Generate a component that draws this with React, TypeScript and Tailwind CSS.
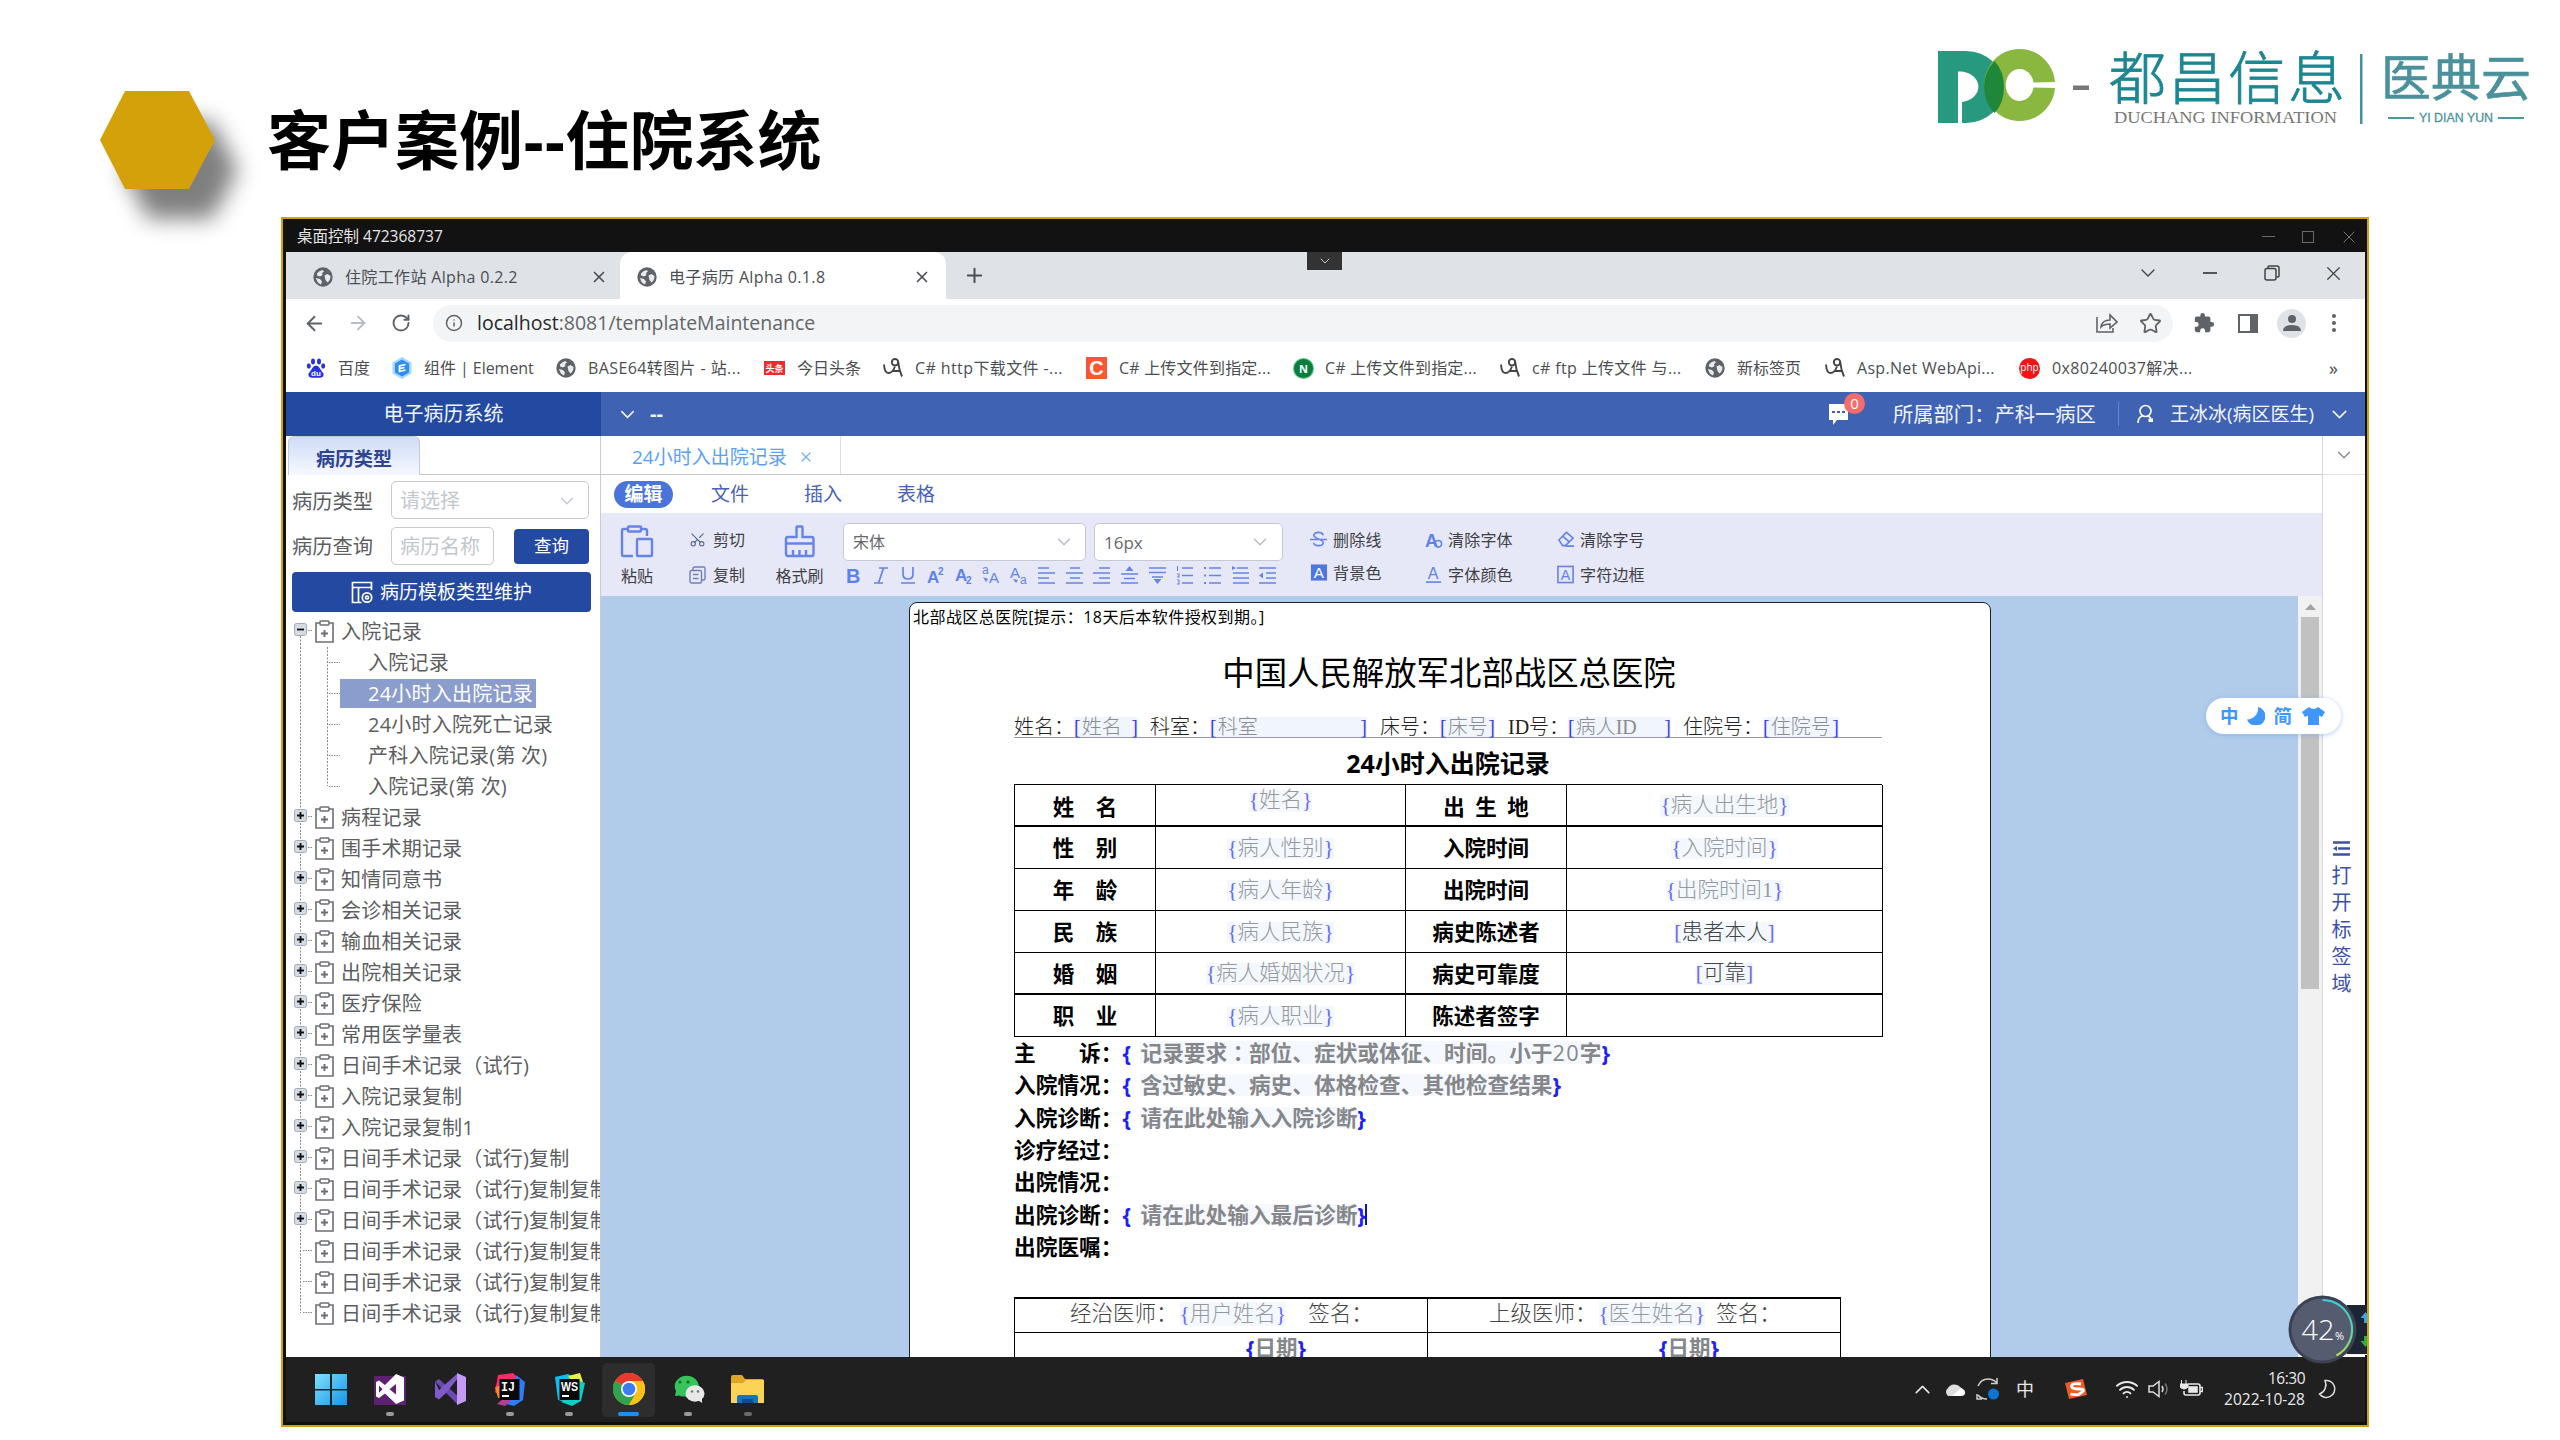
import React from "react";
import {
  ArrowLeft,
  ArrowRight,
  RotateCw,
  Info,
  Star,
  ChevronDown,
  ChevronUp,
  X,
  Plus,
  Scissors,
  Wifi,
} from "lucide-react";

const SONG = "font-['Liberation_Serif','Noto_Sans_CJK_SC',sans-serif] font-light";

/* ---------- slide header ---------- */

function Hexagon() {
  return (
    <svg className="block" width="180" height="190" viewBox="0 0 180 190">
      <defs>
        <filter id="hexShadow" x="-50%" y="-50%" width="200%" height="200%">
          <feGaussianBlur stdDeviation="11" />
        </filter>
      </defs>
      <polygon points="55,51 119,51 145,100 119,149 55,149 30,100" fill="#000" opacity="0.5" filter="url(#hexShadow)" transform="translate(13 10)" />
      <polygon points="45,31 109,31 135,80 109,129 45,129 20,80" fill="#d5a10b" />
    </svg>
  );
}

function BrandLogo() {
  return (
    <svg className="block overflow-visible" width="620" height="90" viewBox="1930 40 620 90" lang="zh-CN">
      <path d="M1938 50H1966A38 36 0 0 1 1966 122H1962V101A20 15.500 0 0 0 1962 70.500H1958V122H1938Z" fill="#27997f" />
      <path d="M2055 81A35.500 36 0 1 0 2055 87L2033.500 86.500A14 16 0 1 1 2033.500 81.500Z" fill="#8ab740" />
      <path d="M1994.500 60Q2004 70 2004 86T1994.500 112Q1984 101 1984 86T1994.500 60Z" fill="#1f873a" />
      <rect x="2073" y="84.500" width="16" height="4.500" fill="#777" />
      <text x="2109" y="98" fontSize="57" fontWeight="300" fill="#1d8693" stroke="#1d8693" strokeWidth="0.800" textLength="236" lengthAdjust="spacing" fontFamily="Noto Sans CJK SC, sans-serif">都昌信息</text>
      <text x="2114" y="122" fontSize="17.500" fill="#777" textLength="223" lengthAdjust="spacingAndGlyphs" fontFamily="Liberation Serif, serif">DUCHANG INFORMATION</text>
      <rect x="2360" y="53" width="2.500" height="70" fill="#4a8fa0" />
      <text x="2381" y="95" fontSize="50" fill="#4a919b" stroke="#4a919b" strokeWidth="0.600" textLength="150" lengthAdjust="spacing" fontFamily="Noto Sans CJK SC, sans-serif">医典云</text>
      <rect x="2388" y="116" width="26" height="2" fill="#4a9a9c" />
      <rect x="2498" y="116" width="26" height="2" fill="#4a9a9c" />
      <text x="2419" y="121" fontSize="13" fill="#4a919b" stroke="#4a919b" strokeWidth="0.300" textLength="74" lengthAdjust="spacingAndGlyphs" fontFamily="Liberation Sans, sans-serif">YI DIAN YUN</text>
    </svg>
  );
}

/* ---------- browser chrome ---------- */

function Globe() {
  return (
    <svg className="block shrink-0" width="20" height="20" viewBox="0 0 20 20">
      <circle cx="10" cy="10" r="9.700" fill="#5f6368" />
      <path d="M4 6.500Q6 3.500 9.500 3l1.500 1.500-2 1.500.5 2-2.500 1.500-3-1Z" fill="#e8eaed" />
      <path d="M3 11l4 1 2 2.500-1 3Q4 16 3 11Z" fill="#e8eaed" />
      <path d="M11.500 8.500l3-1.500 3 2q0 4-3 6.500l-2-2.500Z" fill="#e8eaed" />
    </svg>
  );
}
function Baidu() {
  return (
    <svg className="block shrink-0" width="20" height="20" viewBox="0 0 20 20" fill="#2932e1">
      <ellipse cx="7" cy="3.500" rx="2" ry="3" />
      <ellipse cx="13" cy="3.500" rx="2" ry="3" />
      <ellipse cx="2.800" cy="8" rx="2" ry="2.700" />
      <ellipse cx="17.200" cy="8" rx="2" ry="2.700" />
      <path d="M10 7.500q2.500 0 4 3t3.500 5q.5 4.500-4 4.300h-7q-4.500.2-4-4.300 2-2 3.500-5t4-3Z" />
      <text x="5" y="17.500" fontSize="8" fontWeight="700" fill="#fff" fontFamily="Liberation Sans, sans-serif">du</text>
    </svg>
  );
}
function ElementIcon() {
  return (
    <svg className="block shrink-0" width="20" height="22" viewBox="0 0 20 22">
      <polygon points="10,0 19.500,5.500 19.500,16.500 10,22 .5,16.500 .5,5.500" fill="#a5d7ff" />
      <polygon points="10,2.500 17,6.500 17,15.500 10,19.500 3,15.500 3,6.500" fill="#2f8ff0" />
      <path d="M13.500 7.500L7.500 9v5.500l6-1.500M7.500 11.700l5-1.200" stroke="#fff" strokeWidth="1.700" fill="none" />
    </svg>
  );
}
function Toutiao() {
  return (
    <div className="flex h-[14px] w-[21px] shrink-0 items-center justify-center bg-[#f02b2b] text-[9px] font-bold text-white">头条</div>
  );
}
function Pen() {
  return (
    <svg className="block shrink-0" width="20" height="20" viewBox="0 0 20 20" fill="none" stroke="#444" strokeWidth="1.900">
      <path d="M1 6.500Q1.500 15 5.500 15T12 8.500" />
      <circle cx="12" cy="4.200" r="3.200" />
      <path d="M15.200 4Q16 12 19 18.500M9.500 13h7" />
    </svg>
  );
}
function CIcon() {
  return (
    <div className="flex h-[22px] w-[21px] shrink-0 items-center justify-center bg-[#fc5531] font-['Liberation_Sans',sans-serif] text-[20px] font-bold text-white">C</div>
  );
}
function NIcon() {
  return (
    <div className="flex size-[19px] shrink-0 items-center justify-center rounded-full bg-[#0b7d3d] text-[11px] font-bold text-white ring-1 ring-[#58c98a]">N</div>
  );
}
function Php() {
  return (
    <div className="flex size-[21px] shrink-0 items-center justify-center rounded-full bg-[#f01414] pb-[2px] text-[10px] text-white">php</div>
  );
}

const BOOKMARKS: { w: string; icon: React.ReactNode; label: string; ls: string }[] = [
  { w: "w-[86px]", icon: <Baidu />, label: "百度", ls: "" },
  { w: "w-[164px]", icon: <ElementIcon />, label: "组件 | Element", ls: "-tracking-[0.050px]" },
  { w: "w-[208px]", icon: <Globe />, label: "BASE64转图片 - 站...", ls: "tracking-[0.400px]" },
  { w: "w-[119px]", icon: <Toutiao />, label: "今日头条", ls: "" },
  { w: "w-[203px]", icon: <Pen />, label: "C# http下载文件 -...", ls: "tracking-[0.400px]" },
  { w: "w-[208px]", icon: <CIcon />, label: "C# 上传文件到指定...", ls: "tracking-[0.200px]" },
  { w: "w-[206px]", icon: <NIcon />, label: "C# 上传文件到指定...", ls: "tracking-[0.200px]" },
  { w: "w-[205px]", icon: <Pen />, label: "c# ftp 上传文件 与...", ls: "tracking-[0.350px]" },
  { w: "w-[120px]", icon: <Globe />, label: "新标签页", ls: "" },
  { w: "w-[194px]", icon: <Pen />, label: "Asp.Net WebApi...", ls: "tracking-[0.300px]" },
  { w: "w-[310px]", icon: <Php />, label: "0x80240037解决...", ls: "tracking-[0.350px]" },
];

function RemoteBar() {
  return (
    <div className="flex h-[33px] items-center bg-[#121212] pt-[2px] text-[#e6e6e6]">
      <span className="ml-[14px] w-[1965px] whitespace-nowrap text-[15.500px]">桌面控制 472368737</span>
      <div className="h-px w-[13px] bg-[#6a6a6a]" />
      <div className="ml-[27px] h-[12px] w-[12px] border border-[#6a6a6a]" />
      <X className="ml-[25px] shrink-0 text-[#808080]" size={20} strokeWidth={1.100} />
    </div>
  );
}

function TabStrip() {
  return (
    <div className="flex h-[47px] bg-[#dfe2e6] text-[16px] tracking-[0.350px] text-[#4b4e52]">
      <div className="flex h-full w-[334px] items-center pt-[3px] pl-[27px]">
        <Globe />
        <span className="ml-[12px] w-[245px] whitespace-nowrap">住院工作站 Alpha 0.2.2</span>
        <X size={18} strokeWidth={2.200} />
      </div>
      <div className="flex h-full w-[326px] items-center rounded-t-[12px] bg-white pt-[3px] pl-[17px]">
        <Globe />
        <span className="ml-[12px] w-[244px] whitespace-nowrap">电子病历 Alpha 0.1.8</span>
        <X size={18} strokeWidth={2.200} />
      </div>
      <div className="flex h-full w-[1190px] items-center pl-[17px]">
        <Plus size={23} strokeWidth={2.100} />
      </div>
      <div className="flex h-[42px] items-center text-[#444]">
        <ChevronDown size={24} strokeWidth={1.400} />
        <div className="ml-[43px] h-[1.500px] w-[14px] bg-[#555]" />
        <svg className="ml-[47px]" width="16" height="16" viewBox="0 0 16 16" fill="none" stroke="#444" strokeWidth="1.500">
          <rect x="1" y="3.500" width="11" height="11.500" rx="2" />
          <path d="M4 3.500V2q0-1 1-1h8q2 0 2 2v8q0 1-1 1h-1.500" />
        </svg>
        <X className="ml-[42px]" size={23} strokeWidth={1.300} />
      </div>
    </div>
  );
}

function AddressBar() {
  return (
    <div className="flex h-[48px] items-center bg-white pl-[17px] text-[#5f6368]">
      <ArrowLeft size={23} strokeWidth={2} />
      <ArrowRight className="ml-[21px] text-[#b9bcc0]" size={22} strokeWidth={2} />
      <RotateCw className="ml-[22px]" size={20} strokeWidth={2.300} />
      <div className="ml-[22px] flex h-[37px] w-[1740px] items-center rounded-full bg-[#f3f4f5]">
        <Info className="ml-[12px]" size={18} strokeWidth={2} />
        <span className="ml-[14px] w-[1619px] text-[19.500px] text-[#62666a]">
          <span className="text-[#26282b]">localhost</span>:8081/templateMaintenance
        </span>
        <svg width="22" height="20" viewBox="0 0 22 20" fill="none" stroke="#5f6368" strokeWidth="1.600">
          <path d="M1 4v15h16v-4" />
          <path d="M5 14q1-7 9-7V2l7 7-7 6v-4q-6 0-9 3Z" />
        </svg>
        <Star className="ml-[21px]" size={23} strokeWidth={1.900} />
      </div>
      <svg className="ml-[20px]" width="22" height="22" viewBox="0 0 24 24" fill="#5f6368">
        <path d="M20.500 11H19V7a2 2 0 0 0-2-2h-4V3.500a2.500 2.500 0 0 0-5 0V5H4a2 2 0 0 0-2 2v3.800h1.500a2.700 2.700 0 0 1 0 5.400H2V20a2 2 0 0 0 2 2h3.800v-1.500a2.700 2.700 0 0 1 5.400 0V22H17a2 2 0 0 0 2-2v-4h1.500a2.500 2.500 0 0 0 0-5Z" />
      </svg>
      <div className="ml-[23px] h-[19px] w-[20px] border-y-[2px] border-r-[8px] border-l-[2.500px] border-[#5f6368]" />
      <div className="ml-[19px] flex size-[29px] items-center justify-center rounded-full bg-[#dfe3e8]">
        <svg width="18" height="18" viewBox="0 0 18 18" fill="#5f6368">
          <circle cx="9" cy="5" r="4" />
          <path d="M0 17q0-6 9-6t9 6Z" />
        </svg>
      </div>
      <svg className="ml-[25px]" width="6" height="20" viewBox="0 0 6 20" fill="#5f6368">
        <circle cx="3" cy="3" r="2" />
        <circle cx="3" cy="10" r="2" />
        <circle cx="3" cy="17" r="2" />
      </svg>
    </div>
  );
}

function Bookmarks() {
  return (
    <div className="flex h-[45px] items-center bg-white pb-[3px] pl-[20px] text-[16px] text-[#4b4e52]">
      {BOOKMARKS.map((b, i) => (
        <div key={i} className={"flex shrink-0 items-center gap-[12px] " + b.w}>
          {b.icon}
          <span className={"whitespace-nowrap " + b.ls}>{b.label}</span>
        </div>
      ))}
      <span className="text-[18px]">»</span>
    </div>
  );
}

/* ---------- application header ---------- */

function AppHeader() {
  return (
    <div className="flex h-[44px] text-[20px] text-[#f0f4ff]">
      <div className="flex w-[315px] items-center justify-center bg-[#2449a0]">电子病历系统</div>
      <div className="flex flex-1 items-center bg-[#4062b2]">
        <ChevronDown className="ml-[15px]" size={23} strokeWidth={1.600} />
        <span className="ml-[11px] w-[1178px] font-bold">--</span>
        <div className="relative">
          <svg className="block" width="21" height="22" viewBox="0 0 21 22">
            <path d="M1 1h19v16h-11l-4 5v-5H1Z" fill="#fff" />
            <path d="M4 9h3M9 9h3M14 9h3" stroke="#4062b2" strokeWidth="2" />
          </svg>
          <div className="absolute -top-[10px] left-[16px] flex size-[21px] items-center justify-center rounded-full bg-[#f56c6c] text-[15px] text-white">0</div>
        </div>
        <span className="ml-[44px] w-[225px] whitespace-nowrap text-[20.300px]">所属部门：产科一病区</span>
        <div className="h-[24px] w-px bg-[#6c88c8]" />
        <svg className="ml-[18px]" width="18" height="20" viewBox="0 0 18 20" fill="none" stroke="#fff" strokeWidth="1.600">
          <circle cx="8.500" cy="7" r="5.500" />
          <path d="M1 19q0-6 5-7.500M11 11.500l3 3" />
          <rect x="11.500" y="14.500" width="4.500" height="3.500" fill="#fff" stroke="none" />
        </svg>
        <span className="ml-[15px] w-[157px] whitespace-nowrap text-[19px]">王冰冰(病区医生)</span>
        <ChevronDown size={25} strokeWidth={1.500} />
      </div>
    </div>
  );
}

/* ---------- sidebar ---------- */

function Clipboard() {
  return (
    <svg className="block shrink-0" width="19" height="23" viewBox="0 0 19 23" fill="none" stroke="#6d6f73" strokeWidth="1.600">
      <path d="M5 3H1V22H18V3H14" />
      <rect x="5" y="1" width="9" height="4" rx="1" />
      <path d="M9.500 10v7M6 13.500h7" strokeWidth="1.900" />
    </svg>
  );
}

type Node = { label: string; kind: "open" | "closed" | "leaf" | "last" | "child" | "childLast"; sel?: boolean };
const TREE: Node[] = [
  { label: "入院记录", kind: "open" },
  { label: "入院记录", kind: "child" },
  { label: "24小时入出院记录", kind: "child", sel: true },
  { label: "24小时入院死亡记录", kind: "child" },
  { label: "产科入院记录(第 次)", kind: "child" },
  { label: "入院记录(第 次)", kind: "childLast" },
  { label: "病程记录", kind: "closed" },
  { label: "围手术期记录", kind: "closed" },
  { label: "知情同意书", kind: "closed" },
  { label: "会诊相关记录", kind: "closed" },
  { label: "输血相关记录", kind: "closed" },
  { label: "出院相关记录", kind: "closed" },
  { label: "医疗保险", kind: "closed" },
  { label: "常用医学量表", kind: "closed" },
  { label: "日间手术记录（试行)", kind: "closed" },
  { label: "入院记录复制", kind: "closed" },
  { label: "入院记录复制1", kind: "closed" },
  { label: "日间手术记录（试行)复制", kind: "closed" },
  { label: "日间手术记录（试行)复制复制", kind: "closed" },
  { label: "日间手术记录（试行)复制复制", kind: "closed" },
  { label: "日间手术记录（试行)复制复制", kind: "leaf" },
  { label: "日间手术记录（试行)复制复制", kind: "leaf" },
  { label: "日间手术记录（试行)复制复制", kind: "last" },
];

function Gutter({ kind }: { kind: Node["kind"] }) {
  const child = kind === "child" || kind === "childLast";
  const box = kind === "open" || kind === "closed";
  return (
    <svg className="block shrink-0" width={child ? 54 : 29} height="31" viewBox={child ? "0 0 54 31" : "0 0 29 31"} stroke="#888" strokeWidth="1" fill="none">
      <path d={kind === "open" ? "M14.500 13V31" : kind === "last" ? "M14.500 0V15" : "M14.500 0V31"} strokeDasharray="2 1.500" />
      {child && <path d={kind === "childLast" ? "M41.500 0V15" : "M41.500 0V31"} strokeDasharray="2 1.500" />}
      {child && <path d="M43 15.500H54" strokeDasharray="1.500 1" />}
      {!child && <path d="M17 14.500H27" strokeDasharray="1.500 1" />}
      {box && (
        <g>
          <rect x="8.500" y="7.500" width="12" height="12" rx="2" fill="#d5dbe3" stroke="#a3abb8" />
          <path d={kind === "closed" ? "M11 13.500H18M14.500 10V17" : "M11 13.500H18"} stroke="#111" strokeWidth="1.800" />
        </g>
      )}
    </svg>
  );
}

function Sidebar() {
  return (
    <div className="flex w-[315px] shrink-0 flex-col overflow-hidden border-r border-[#c9ccd4] bg-white text-[20px] text-[#5c5e62]">
      <div className="flex h-[39px] pl-[2px]">
        <div className="flex w-[132px] items-center justify-center rounded-t-[6px] border border-b-0 border-[#c3c9d6] bg-gradient-to-b from-[#cfdcf6] to-[#f6f9ff] pt-[7px] text-[19px] font-bold text-[#2f4591]">病历类型</div>
        <div className="flex-1 border-b border-[#c6c8cc]" />
      </div>
      <div className="mt-[6px] flex h-[38px] items-center pl-[6px]">
        <span className="w-[99px] pt-[2px] text-[20.300px]">病历类型</span>
        <div className="flex h-[38px] w-[198px] items-center justify-between rounded-[5px] border border-[#c8cad0] pt-[2px] pr-[10px] pl-[8px] text-[#c4c7cd]">
          请选择
          <ChevronDown size={22} strokeWidth={1.400} />
        </div>
      </div>
      <div className="mt-[8px] flex h-[38px] items-center pl-[6px]">
        <span className="w-[99px] pt-[1px] text-[20.300px]">病历查询</span>
        <div className="flex h-[38px] w-[103px] items-center rounded-[5px] border border-[#c8cad0] pt-[1px] pl-[8px] text-[#c4c7cd]">病历名称</div>
        <div className="ml-[20px] flex h-[35px] w-[75px] items-center justify-center rounded-[4px] bg-[#2449a0] text-[17.500px] text-white">查询</div>
      </div>
      <div className="mt-[7px] ml-[6px] flex h-[40px] w-[299px] items-center justify-center gap-[6px] rounded-[4px] bg-[#2449a0] text-[19px] text-white">
        <svg width="23" height="23" viewBox="0 0 23 23" fill="none" stroke="#fff" strokeWidth="1.700">
          <path d="M20.500 9V1.500H1.500v20h9M1.500 6.500h19M7.500 6.500v15" />
          <circle cx="16" cy="16.500" r="4.700" />
          <circle cx="16" cy="16.500" r="1.500" />
        </svg>
        病历模板类型维护
      </div>
      <div className="mt-[4px] flex flex-col tracking-[0.220px]">
        {TREE.map((n, i) => {
          const child = n.kind === "child" || n.kind === "childLast";
          return (
            <div key={i} className="flex h-[31px] items-center whitespace-nowrap">
              <Gutter kind={n.kind} />
              {child ? (
                <span className={n.sel ? "flex h-[29px] items-center bg-[#8b9dcc] pr-[3px] pl-[28px] text-white" : "pl-[28px]"}>{n.label}</span>
              ) : (
                <React.Fragment>
                  <Clipboard />
                  <span className="ml-[7px]">{n.label}</span>
                </React.Fragment>
              )}
            </div>
          );
        })}
      </div>
    </div>
  );
}

/* ---------- editor ribbon ---------- */

const S = { fill: "none", stroke: "#6584e4", strokeWidth: 1.7 } as const;
const GLYPHS: React.ReactNode[] = [
  <text x="3" y="17" fontSize="20" fontWeight="600" fill="#5f82e6">B</text>,
  <path d="M8 2h9M3 17h9M12.500 2L7.500 17" {...S} />,
  <path d="M5 1v7q0 5 5 5t5-5V1M3 17h14" {...S} />,
  <g fill="#5f82e6" fontWeight="600"><text x="1" y="17" fontSize="17">A</text><text x="12" y="9" fontSize="10">2</text></g>,
  <g fill="#5f82e6" fontWeight="600"><text x="1" y="15" fontSize="17">A</text><text x="12" y="18" fontSize="10">2</text></g>,
  <g fill="#6584e4"><text x="1" y="8" fontSize="12">a</text><text x="8" y="17" fontSize="15">A</text><path d="M2 11l3 5 2-3Z" /></g>,
  <g fill="#6584e4"><text x="1" y="12" fontSize="15">A</text><text x="11" y="18" fontSize="12">a</text><path d="M4 13l3 4 2-3Z" /></g>,
  <path d="M1 2h11M1 7h17M1 12h11M1 17h17" {...S} />,
  <path d="M5 2h10M1 7h17M5 12h10M1 17h17" {...S} />,
  <path d="M7 2h11M1 7h17M7 12h11M1 17h17" {...S} />,
  <g><path d="M1 8h17M4 12.500h11M1 17h17" {...S} /><path d="M9.500 0l4 5h-8Z" fill="#6584e4" /></g>,
  <g><path d="M1 2h17M1 6.500h17M4 11h11" {...S} /><path d="M9.500 18l-4-5h8Z" fill="#6584e4" /></g>,
  <g><path d="M7 2h11M7 9.500h11M7 17h11" {...S} /><path d="M2.500 0v5M2 8h2v3H2M2 14h2v4H2" {...S} strokeWidth={1.1} /></g>,
  <g><path d="M6 2h12M6 9.500h12M6 17h12" {...S} /><path d="M1 2h2M1 9.500h2M1 17h2" {...S} strokeWidth={2.2} /></g>,
  <g><path d="M6 2h11M2 7h16M2 12h16M2 17h16" {...S} /><path d="M1 0l4 2-4 2Z" fill="#6584e4" /></g>,
  <g><path d="M1 2h17M8 7h10M8 12h10M1 17h17" {...S} /><path d="M1 9.500l4-3v6Z" fill="#6584e4" /></g>,
];

const MINI: { icon: React.ReactNode; label: string }[][] = [
  [
    { icon: <path d="M14 5q-1-3-5-3t-5 3q0 2 5 4t5 4q0 3-5 3t-5-3M0 9.500h18" {...S} />, label: "删除线" },
    { icon: <g><rect x="1" y="1" width="17" height="17" fill="#4f76dc" /><text x="4" y="15.500" fontSize="16" fill="#fff">A</text></g>, label: "背景色" },
  ],
  [
    { icon: <g><text x="0" y="17" fontSize="19" fontWeight="600" fill="#5f82e6">A</text><circle cx="14" cy="14" r="3.500" {...S} /></g>, label: "清除字体" },
    { icon: <g><text x="3" y="14" fontSize="17" fill="#5f82e6">A</text><path d="M1 17.500h16" {...S} /></g>, label: "字体颜色" },
  ],
  [
    { icon: <path d="M2 10L10 2l7 6-8 8H6ZM6 6l7 6M9 16.500h9" {...S} />, label: "清除字号" },
    { icon: <g><rect x="1" y="1" width="16" height="17" {...S} /><text x="4" y="15.500" fontSize="15" fill="#5f82e6">A</text></g>, label: "字符边框" },
  ],
];

function Ribbon() {
  return (
    <div className="flex h-[83px] bg-[#e6e8f8] text-[16px] text-[#3e4044]">
      <div className="flex w-[69px] flex-col items-center pt-[12px] pl-[3px]">
        <svg width="34" height="33" viewBox="0 0 34 33" fill="none" stroke="#6584e4" strokeWidth="2.400">
          <path d="M8 4H3.500q-1.500 0-1.500 1.500V29q0 2 1.500 2H13M20 4h5q2 0 2 1.500V11" />
          <rect x="8" y="1.500" width="13" height="5" rx="1" />
          <rect x="17" y="14" width="15" height="17" rx="1" />
        </svg>
        <span className="mt-[10px]">粘贴</span>
      </div>
      <div className="flex w-[90px] flex-col pt-[18px] pl-[19px]">
        <div className="flex items-center gap-[7px] whitespace-nowrap"><Scissors className="-rotate-90 text-[#5b6b94]" size={17} strokeWidth={1.600} />剪切</div>
        <div className="mt-[18px] flex items-center gap-[7px] whitespace-nowrap">
          <svg width="17" height="18" viewBox="0 0 17 18" fill="none" stroke="#6f80b8" strokeWidth="1.400">
            <rect x="1" y="4.500" width="11.500" height="12.500" rx="1.500" />
            <path d="M4 4V2.500Q4 1 5.500 1H14.500Q16 1 16 2.500V12.500Q16 14 14.500 14H13M4 8.500H9.500M4 12.500H9.500" />
          </svg>
          复制
        </div>
      </div>
      <div className="flex w-[77px] flex-col items-center pt-[12px] pl-[2px]">
        <svg width="32" height="33" viewBox="0 0 32 33" fill="none" stroke="#6584e4" strokeWidth="2.400">
          <path d="M12.500 12V2.500q0-1 1-1h4q1 0 1 1V12h9q2 0 2 2v15q0 2-2 2H4q-2 0-2-2V14q0-2 2-2ZM2 18.500h28M9 31v-6M15.500 31v-6M22 31v-6" />
        </svg>
        <span className="mt-[10px]">格式刷</span>
      </div>
      <div className="flex w-[463px] flex-col pt-[10px] pl-[6px]">
        <div className="flex gap-[8px]">
          <div className="flex h-[38px] w-[243px] items-center justify-between rounded-[5px] border border-[#c6c9d4] bg-white pr-[10px] pl-[9px] text-[#66686c]">宋体<ChevronDown size={22} strokeWidth={1.300} className="text-[#b4b7be]" /></div>
          <div className="flex h-[38px] w-[189px] items-center justify-between rounded-[5px] border border-[#c6c9d4] bg-white pr-[11px] pl-[9px] text-[17px] text-[#66686c]">16px<ChevronDown size={22} strokeWidth={1.300} className="text-[#b4b7be]" /></div>
        </div>
        <div className="mt-[5px] flex font-['Liberation_Sans',sans-serif]">
          {GLYPHS.map((g, i) => (
            <svg key={i} className="mr-[8.700px] block shrink-0" width="19" height="19" viewBox="0 0 19 19">{g}</svg>
          ))}
        </div>
      </div>
      <div className="flex pt-[17px] pl-[10px]">
        {MINI.map((col, i) => (
          <div key={i} className={i === 1 ? "w-[132px]" : "w-[115px]"}>
            {col.map((m, j) => (
              <div key={j} className={"flex items-center gap-[5px] whitespace-nowrap tracking-[0.200px] " + (j ? (i ? "mt-[16px]" : "mt-[14px]") : "")}>
                <svg className="block shrink-0 font-['Liberation_Sans',sans-serif]" width="18" height="19" viewBox="0 0 19 19">{m.icon}</svg>
                {m.label}
              </div>
            ))}
          </div>
        ))}
      </div>
    </div>
  );
}

/* ---------- document ---------- */

const Br = ({ c }: { c: string }) => <span className="text-[#3a3af0]">{c}</span>;

function Field({ l, r, v, cls }: { l: string; r: string; v: string; cls?: string }) {
  return (
    <span className={"flex justify-between bg-[#f1f6fe] text-[#8a8c90] " + (cls || "")}>
      <Br c={l} />
      <span className="flex-1 pl-px">{v}</span>
      <Br c={r} />
    </span>
  );
}

const ROWS: [string, string, string, string][] = [
  ["姓　名", "{姓名}", "出 生 地", "{病人出生地}"],
  ["性　别", "{病人性别}", "入院时间", "{入院时间}"],
  ["年　龄", "{病人年龄}", "出院时间", "{出院时间1}"],
  ["民　族", "{病人民族}", "病史陈述者", "[患者本人]"],
  ["婚　姻", "{病人婚姻状况}", "病史可靠度", "[可靠]"],
  ["职　业", "{病人职业}", "陈述者签字", ""],
];

function Value({ v }: { v: string }) {
  if (!v) return null;
  const solid = v[0] === "[";
  return (
    <span className={"bg-[#f3f8ff] " + (solid ? "text-[#444]" : "text-[#97999c]")}>
      <span className="text-[#6a6af5]">{v[0]}</span>
      {v.slice(1, -1)}
      <span className="text-[#6a6af5]">{v[v.length - 1]}</span>
    </span>
  );
}

const SECTIONS: { label: string; hint?: React.ReactNode; caret?: boolean }[] = [
  {
    label: "主　　诉：",
    hint: (
      <React.Fragment>
        记录要求<span lang="zh-TW" className="font-['Noto_Sans_CJK_TC',sans-serif]">：</span>部位、症状或体征、时间。小于<span className="font-medium tracking-[1.200px]">20</span>字
      </React.Fragment>
    ),
  },
  { label: "入院情况：", hint: "含过敏史、病史、体格检查、其他检查结果" },
  { label: "入院诊断：", hint: "请在此处输入入院诊断" },
  { label: "诊疗经过：" },
  { label: "出院情况：" },
  { label: "出院诊断：", hint: "请在此处输入最后诊断", caret: true },
  { label: "出院医嘱：" },
];

const CELL = "flex items-center justify-center whitespace-pre border-r border-b border-black ";

function Paper() {
  return (
    <div className="mt-[6px] ml-[308px] h-[770px] w-[1082px] shrink-0 rounded-t-[8px] border-[1.500px] border-[#1c1f28] bg-white text-black">
      <div className="mt-[6px] ml-[3px] text-[16px] tracking-[0.450px]">北部战区总医院[提示：18天后本软件授权到期。]</div>
      <div className="ml-[104px] w-[868px]">
        <div className="mt-[31px] pl-[2px] text-center text-[32.400px]">中国人民解放军北部战区总医院</div>
        <div className={"mt-[28px] flex h-[22px] items-center border-b border-[#9a9a9a] text-[20px] whitespace-nowrap text-[#222] " + SONG}>
          <span className="w-[60px]">姓名：</span>
          <Field l="[" r="]" v="姓名" cls="w-[64px]" />
          <span className="ml-[12px] w-[60px]">科室：</span>
          <Field l="[" r="]" v="科室" cls="w-[157px]" />
          <span className="ml-[13px] w-[60px]">床号：</span>
          <Field l="[" r="]" v="床号" cls="w-[55px]" />
          <span className="ml-[13px] w-[60px]">ID号：</span>
          <Field l="[" r="]" v="病人ID" cls="w-[103px]" />
          <span className="ml-[12px] w-[80px]">住院号：</span>
          <Field l="[" r="]" v="住院号" cls="w-[76px]" />
        </div>
        <div className="mt-[13px] text-center text-[25px] font-bold">24小时入出院记录</div>
        <div className="mt-[8px] grid w-[868px] grid-cols-[141px_250px_161px_316px] auto-rows-[42px] border-t border-l border-black text-[21.500px]">
          {ROWS.map((r, i) => {
            const thick = i === 0 || i === 4 ? "border-b-2 " : "";
            const head = i === 0 ? "pt-[2px] " : "";
            return (
              <React.Fragment key={i}>
                <div className={CELL + thick + head + "font-bold"}>{r[0]}</div>
                <div className={CELL + thick + SONG + (i === 0 ? " pb-[9px]" : " pt-[1px]")}><Value v={r[1]} /></div>
                <div className={CELL + thick + head + "font-bold" + (i === 0 ? " [word-spacing:5px]" : "")}>{r[2]}</div>
                <div className={CELL + thick + SONG + " pt-[1px]"}><Value v={r[3]} /></div>
              </React.Fragment>
            );
          })}
        </div>
        <div className="-mt-[1px] text-[21.700px] font-bold">
          {SECTIONS.map((s) => (
            <div key={s.label} className="flex h-[32.400px] items-center whitespace-pre">
              <span>{s.label}</span>
              {s.hint && (
                <span className="flex items-center text-[#85878a]">
                  <span className="w-[18px] text-[#2020f0]">{"{"}</span>
                  <span className="bg-[#f5f9ff]">{s.hint}</span>
                  <span className="w-[8px] text-[#2020f0]">{"}"}</span>
                  {s.caret && <span className="h-[21px] w-[1.500px] bg-[#1010c0]" />}
                </span>
              )}
            </div>
          ))}
        </div>
        <div className={"mt-[34px] grid w-[827px] grid-cols-2 border-t-2 border-l border-black text-[21.500px] whitespace-nowrap text-[#444] " + SONG}>
          <div className="flex h-[34px] items-center border-r border-b border-black pb-[2px] pl-[55px]">
            经治医师：<span className="ml-[2px]"><Value v="{用户姓名}" /></span><span className="ml-[22px]">签名：</span>
          </div>
          <div className="flex h-[34px] items-center border-r border-b border-black pb-[2px] pl-[61px]">
            上级医师：<span className="ml-[2px]"><Value v="{医生姓名}" /></span><span className="ml-[11px]">签名：</span>
          </div>
          {[0, 1].map((k) => (
            <div key={k} className="h-[60px] border-r border-black pt-[4px] pl-[231px] font-['Open_Sans','Noto_Sans_CJK_SC',sans-serif] font-bold text-[#85878a]">
              <span className="text-[#2020f0]">{"{"}</span>日期<span className="text-[#2020f0]">{"}"}</span>
            </div>
          ))}
        </div>
      </div>
    </div>
  );
}

function Editor() {
  return (
    <div className="flex min-w-0 flex-1 flex-col">
      <div className="flex h-[39px] border-b border-[#c6c8cc] bg-white text-[19px] text-[#5b9ff2]">
        <div className="flex w-[240px] items-center border-r border-[#dcdee3] pt-[4px] pl-[31px] whitespace-nowrap">
          24小时入出院记录
          <X className="ml-[11px] text-[#7aaeea]" size={16} strokeWidth={1.900} />
        </div>
      </div>
      <div className="flex h-[38px] items-center bg-white text-[19px] text-[#4a62b5]">
        <div className="ml-[13px] flex h-[27px] w-[59px] items-center justify-center rounded-full bg-[#4a74da] font-bold text-white">编辑</div>
        <span className="ml-[38px] w-[93px]">文件</span>
        <span className="w-[93px]">插入</span>
        <span>表格</span>
      </div>
      <Ribbon />
      <div className="flex min-h-0 flex-1 overflow-hidden bg-[#b1cbea]">
        <Paper />
        <div className="flex-1" />
        <div className="flex w-[24px] flex-col items-center bg-[#f1f1f1]">
          <svg className="mt-[8px] mb-[7px] block shrink-0" width="11" height="6" viewBox="0 0 11 6"><path d="M5.500 0L11 6H0Z" fill="#a3a3a3" /></svg>
          <div className="h-[372px] w-[18px] bg-[#c1c1c1]" />
        </div>
      </div>
    </div>
  );
}

function TagPanel() {
  return (
    <div className="flex w-[43px] shrink-0 flex-col items-center border-l border-[#d5d7dc] bg-white text-[20px] text-[#3c52a6]">
      <div className="flex h-[39px] w-full items-center justify-center border-b border-[#dfe1e6]">
        <ChevronDown size={22} strokeWidth={1.400} className="text-[#888]" />
      </div>
      <svg className="mt-[366px] mb-[6px] -ml-[5px] block" width="17" height="15" viewBox="0 0 17 15">
        <path d="M0 1.500h17M5 7.500h12M0 13.500h17" stroke="#3c52a6" strokeWidth="2.400" />
        <path d="M0 7.500l4-2.500v5Z" fill="#3c52a6" />
      </svg>
      {["打", "开", "标", "签", "域"].map((c) => (
        <span key={c} className="-ml-[5px] flex h-[27.200px] items-center">{c}</span>
      ))}
    </div>
  );
}

/* ---------- taskbar ---------- */

function Win() {
  return (
    <svg width="32" height="32" viewBox="0 0 32 32">
      <defs><linearGradient id="winG" x1="0" y1="0" x2="1" y2="1"><stop offset="0" stopColor="#7fe0fb" /><stop offset="1" stopColor="#1495e8" /></linearGradient></defs>
      <path d="M0 1h15v15H0ZM17 1h15v15H17ZM0 17.500h15v15H0ZM17 17.500h15v15H17Z" fill="url(#winG)" />
    </svg>
  );
}
function VsA() {
  return (
    <svg width="32" height="32" viewBox="0 0 32 32">
      <path d="M0 3h32v29H0Z" fill="#5d2172" />
      <path fillRule="evenodd" d="M22 1l8 3.500v23L22 31 11 20.500 5 25l-3-1.500V9l3-1.500L11 12ZM22 11l-6.500 5.200L22 21.500ZM5 12.500v7.300l3.500-3.500Z" fill="#fff" />
    </svg>
  );
}
function VsB() {
  return (
    <svg width="32" height="32" viewBox="0 0 32 32">
      <path d="M1 8.500L5 6l22 20-3 6Z" fill="#6a4bb5" />
      <path d="M1 8.500V24l4 2.500L12 20 24 5V0L5 17Z" fill="#7d5bc9" />
      <path d="M23 0l9 4v24l-9 4Z" fill="#c49af5" />
    </svg>
  );
}
function IntelliJ() {
  return (
    <svg width="33" height="33" viewBox="0 0 33 33">
      <path d="M5 2L20 0l6 6-16 20-8-7Z" fill="#fe2b6c" />
      <path d="M2 14l9-2 3 14-9-1Z" fill="#f6872b" />
      <path d="M23 2l9 7-2 18-9 6-12-3 12-8Z" fill="#2f7cf6" />
      <path d="M4 31l8-7 6 4-6 5Z" fill="#b0408f" />
      <rect x="6.500" y="6" width="20" height="21" fill="#0a0a0a" />
      <text x="8" y="17.500" fontSize="12" fontWeight="700" fill="#fff" textLength="14" lengthAdjust="spacingAndGlyphs" fontFamily="Liberation Mono, monospace">IJ</text>
      <rect x="9" y="22" width="7" height="2" fill="#fff" />
    </svg>
  );
}
function WebStorm() {
  return (
    <svg width="33" height="33" viewBox="0 0 33 33">
      <path d="M2 4l13-3 9 5-8 24-11-3Z" fill="#10bdf2" />
      <path d="M15 3l12-3 3 9-8 4Z" fill="#e8f04b" />
      <path d="M24 7l8 3-4 18-9 5-11-4 14-7Z" fill="#0bcfc4" />
      <rect x="6.500" y="6" width="20" height="21" fill="#0a0a0a" />
      <text x="8" y="17.500" fontSize="12" fontWeight="700" fill="#fff" textLength="17" lengthAdjust="spacingAndGlyphs" fontFamily="Liberation Sans, sans-serif">WS</text>
      <rect x="9" y="22" width="7" height="2" fill="#fff" />
    </svg>
  );
}
function Chrome() {
  return (
    <svg width="32" height="32" viewBox="0 0 32 32">
      <circle cx="16" cy="16" r="16" fill="#fbc116" />
      <path d="M16 16L2.100 8A16 16 0 0 0 16 32l7-12Z" fill="#31a350" />
      <path d="M16 16L2.100 8A16 16 0 0 1 29.900 8H16Z" fill="#e33b2e" />
      <path d="M16 8h13.900A16 16 0 0 1 16 32l7-12Z" fill="#fbc116" />
      <circle cx="16" cy="16" r="8" fill="#fff" />
      <circle cx="16" cy="16" r="6.300" fill="#3b7ded" />
    </svg>
  );
}
function WeChat() {
  return (
    <svg width="33" height="32" viewBox="0 0 33 32">
      <path d="M3 23l1-5A12 10.500 0 1 1 12 23.500q-4 0-5-1Z" fill="#35c35b" />
      <circle cx="8" cy="9" r="1.600" fill="#17662d" /><circle cx="16" cy="9" r="1.600" fill="#17662d" />
      <ellipse cx="23" cy="20.500" rx="9.500" ry="8.300" fill="#e8e8e8" />
      <path d="M26 27l4 3v-5Z" fill="#e8e8e8" />
      <circle cx="20" cy="18.500" r="1.300" fill="#777" /><circle cx="26" cy="18.500" r="1.300" fill="#777" />
    </svg>
  );
}
function Folder() {
  return (
    <svg width="33" height="32" viewBox="0 0 33 32">
      <path d="M0 4q0-2 2-2h9l3 4h17q2 0 2 2v20H0Z" fill="#e0a526" />
      <path d="M0 10h12l3-3h18v23H0Z" fill="#fcd354" />
      <path d="M6 30v-6q0-2 2-2h17q2 0 2 2v6Z" fill="#1673bf" />
      <path d="M11 26h11v4H11Z" fill="#0c4f88" />
    </svg>
  );
}

const APPS: { icon: React.ReactNode; dot: string; bg?: boolean }[] = [
  { icon: <Win />, dot: "w-0" },
  { icon: <VsA />, dot: "w-[8px] bg-[#9a9a9a]" },
  { icon: <VsB />, dot: "w-0" },
  { icon: <IntelliJ />, dot: "w-[8px] bg-[#9a9a9a]" },
  { icon: <WebStorm />, dot: "w-[8px] bg-[#9a9a9a]" },
  { icon: <Chrome />, dot: "w-[21px] bg-[#1a91f2]", bg: true },
  { icon: <WeChat />, dot: "w-[8px] bg-[#9a9a9a]" },
  { icon: <Folder />, dot: "w-[8px] bg-[#6a6a6a]" },
];

function Taskbar() {
  return (
    <div className="flex h-[65px] items-center bg-[#202020] text-[#e8e8e8]">
      <div className="flex pl-[15px]">
        {APPS.map((a, i) => (
          <div key={i} className="flex w-[59.600px] justify-center">
            <div className={"flex h-[54px] w-[53px] flex-col items-center rounded-[5px] pt-[10px] " + (a.bg ? "bg-[#2d2d2d]" : "")}>
              <div className="h-[33px]">{a.icon}</div>
              <div className={"mt-[6px] h-[4px] rounded-full " + a.dot} />
            </div>
          </div>
        ))}
      </div>
      <div className="flex flex-1 items-center justify-end pr-[28px] pb-[1px]">
        <ChevronUp size={25} strokeWidth={1.500} />
        <svg className="ml-[8px]" width="23" height="15" viewBox="0 0 23 15"><path d="M5 14a5 5 0 0 1 0-8 7 6 0 0 1 12-1 5 5 0 0 1 1 9Z" fill="#dedede" /><path d="M9 14l9-8q5 2 4 6-1 2-4 2Z" fill="#fff" /></svg>
        <svg className="ml-[10px]" width="24" height="24" viewBox="0 0 24 24" fill="none" stroke="#ccc" strokeWidth="1.500">
          <path d="M2 9Q5 2 12 2q5 0 9 4M21 1v5.500h-6M1 17v5h5M2 18q3 4 9 4" />
          <circle cx="17.500" cy="17" r="5.500" fill="#0a74d4" stroke="none" />
        </svg>
        <span className="ml-[16px] text-[18px]">中</span>
        <svg className="ml-[31px]" width="22" height="20" viewBox="0 0 22 20">
          <path d="M0 4L18 0l4 16L4 20Z" fill="#ee5a24" />
          <path d="M16 5Q7 4 6.500 7t8 3-1 5.500q-5 .5-8-.5" fill="none" stroke="#fff" strokeWidth="2.800" />
        </svg>
        <Wifi className="ml-[28px]" size={24} strokeWidth={1.900} />
        <svg className="ml-[9px]" width="22" height="18" viewBox="0 0 22 18" fill="none" stroke="#ddd" strokeWidth="1.500">
          <path d="M1 6h4l6-4.500v15L5 12H1Z" /><path d="M14 6q2 3 0 6" /><path d="M17 3.500q4 5.500 0 11" stroke="#777" />
        </svg>
        <svg className="ml-[10px]" width="23" height="18" viewBox="0 0 23 18" fill="none" stroke="#e8e8e8" strokeWidth="1.600">
          <path d="M8 4h10q2 0 2 2v7q0 2-2 2H6q-2 0-2-2v-2M20.500 7.500h2v4h-2" /><path d="M1.500 0v4M6 0v4M0 4h8v3q-4 4-8 0Z" fill="#e8e8e8" strokeWidth="1" /><rect x="9" y="7" width="8" height="5" fill="#e8e8e8" />
        </svg>
        <div className="ml-[20px] flex w-[82px] flex-col items-end gap-[6px] text-[15.500px] whitespace-nowrap">
          <span className="-tracking-[0.500px]">16:30</span>
          <span>2022-10-28</span>
        </div>
        <svg className="ml-[13px]" width="19" height="20" viewBox="0 0 19 20" fill="none" stroke="#ddd" strokeWidth="1.500"><path d="M7 1.500A8.500 8.500 0 1 1 1.500 15 10 10 0 0 0 7 1.500Z" /></svg>
      </div>
    </div>
  );
}

/* ---------- floating overlays ---------- */

function Overlays() {
  return (
    <React.Fragment>
      <div className="absolute top-[33px] left-[1024px] flex h-[18px] w-[35px] items-center justify-center bg-[#333] text-[#ddd]">
        <ChevronDown size={16} strokeWidth={1.300} />
      </div>
      <div className="absolute top-[479px] left-[1923px] flex h-[36px] w-[135px] items-center rounded-full bg-white pl-[14px] text-[18.500px] font-bold text-[#4096ff] shadow-[0_1px_5px_rgba(120,170,240,0.6)]">
        <span>中</span>
        <svg className="ml-[8px]" width="18" height="18" viewBox="0 0 18 18"><path d="M11 0A9.500 9.500 0 1 1 0 12.500 11 11 0 0 0 11 0Z" fill="#4096ff" /></svg>
        <span className="ml-[9px]">简</span>
        <svg className="ml-[10px]" width="23" height="20" viewBox="0 0 23 20"><path d="M7 1q4.500 4 9 0l7 5-3 5-3-1.500V19H6V9.500L3 11 0 6Z" fill="#4096ff" /></svg>
      </div>
      <div className="absolute top-[1086px] left-[2064px] flex h-[50px] w-[20px] flex-col items-end justify-around overflow-hidden border-b border-[#eee] bg-[#1d2433]">
        <svg className="-mr-[4px] shrink-0" width="11" height="11" viewBox="0 0 11 11"><path d="M5.500 0l5 6h-3.500v5h-3V6H.5Z" fill="#3aa5f0" /></svg>
        <svg className="-mr-[4px] shrink-0" width="11" height="11" viewBox="0 0 11 11"><path d="M5.500 11l5-6h-3.500V0h-3v5H.5Z" fill="#27b53b" /></svg>
      </div>
      <div className="absolute top-[1076px] left-[2005px]">
        <svg className="block" width="69" height="69" viewBox="0 0 69 69">
          <defs><linearGradient id="arcG" x1="0" y1="0" x2="0" y2="1"><stop offset="0" stopColor="#37cfd6" /><stop offset="0.600" stopColor="#54dca0" /><stop offset="1" stopColor="#b4e04b" /></linearGradient></defs>
          <circle cx="34.500" cy="34.500" r="34" fill="#3c4254" />
          <circle cx="34.500" cy="34.500" r="31" fill="#565c70" />
          <path d="M34.500 5A29.500 29.500 0 0 1 48.500 60.500" fill="none" stroke="url(#arcG)" strokeWidth="2" />
          <text x="13.500" y="45" fontSize="28" fontWeight="300" fill="#fff" textLength="33" lengthAdjust="spacingAndGlyphs" fontFamily="Open Sans, sans-serif">42</text>
          <text x="47" y="45" fontSize="11" fill="#fff" fontFamily="Open Sans, sans-serif">%</text>
        </svg>
      </div>
    </React.Fragment>
  );
}

export default function App() {
  return (
    <div lang="zh-CN" className="flex h-[1440px] w-[2560px] flex-col overflow-hidden bg-white font-['Open_Sans','Noto_Sans_CJK_SC',sans-serif] leading-none">
      <div className="flex h-[217px] items-start">
        <div className="mt-[60px] ml-[80px]"><Hexagon /></div>
        <h1 className="mt-[110px] ml-[7px] w-[1663px] font-['Liberation_Sans','Noto_Sans_CJK_SC',sans-serif] text-[64px] font-bold whitespace-nowrap text-black">客户案例--住院系统</h1>
        <div className="mt-[41px]"><BrandLogo /></div>
      </div>
      <div className="relative ml-[281px] flex h-[1210px] w-[2088px] flex-col border-2 border-[#d5a10b] bg-[#101010]">
        <RemoteBar />
        <div className="mr-[2px] ml-[3px] flex flex-1 flex-col">
          <TabStrip />
          <AddressBar />
          <Bookmarks />
          <AppHeader />
          <div className="flex h-[921px]">
            <Sidebar />
            <Editor />
            <TagPanel />
          </div>
          <Taskbar />
        </div>
        <Overlays />
      </div>
    </div>
  );
}
